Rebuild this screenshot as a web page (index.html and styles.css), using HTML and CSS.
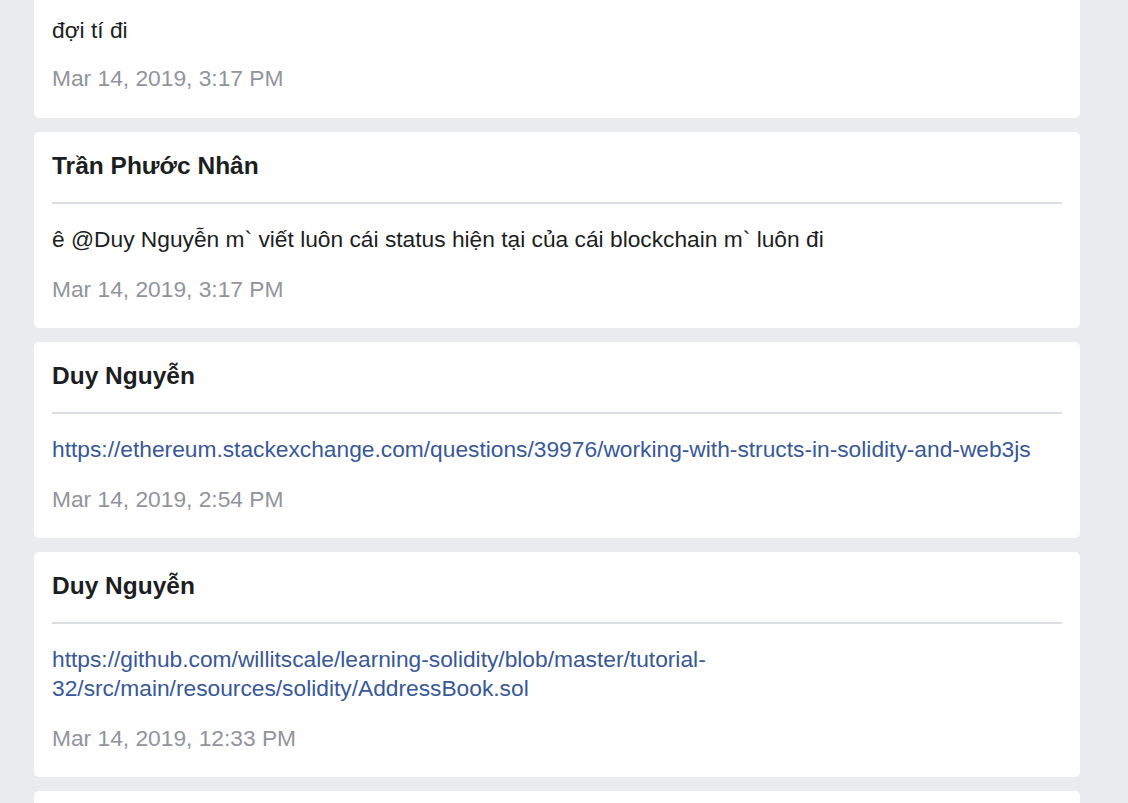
FILE: index.html
```html
<!DOCTYPE html>
<html lang="vi">
<head>
<meta charset="utf-8">
<title>Messages</title>
<link rel="stylesheet" href="styles.css">
</head>
<body>
<main class="feed">
  <article class="card card-cut">
    <p class="msg">đợi tí đi</p>
    <p class="date">Mar 14, 2019, 3:17 PM</p>
  </article>
  <article class="card">
    <h2 class="author">Trần Phước Nhân</h2>
    <hr class="divider">
    <p class="msg">ê @Duy Nguyễn m` viết luôn cái status hiện tại của cái blockchain m` luôn đi</p>
    <p class="date">Mar 14, 2019, 3:17 PM</p>
  </article>
  <article class="card">
    <h2 class="author">Duy Nguyễn</h2>
    <hr class="divider">
    <p class="msg"><a class="link" href="#">https://ethereum.stackexchange.com/questions/39976/working-with-structs-in-solidity-and-web3js</a></p>
    <p class="date">Mar 14, 2019, 2:54 PM</p>
  </article>
  <article class="card">
    <h2 class="author">Duy Nguyễn</h2>
    <hr class="divider">
    <p class="msg"><a class="link" href="#">https://github.com/willitscale/learning-solidity/blob/master/tutorial-32/src/main/resources/solidity/AddressBook.sol</a></p>
    <p class="date">Mar 14, 2019, 12:33 PM</p>
  </article>
  <article class="card card-tail"></article>
</main>
</body>
</html>
```

FILE: styles.css
```css
html, body {
  margin: 0;
  padding: 0;
  background: #e9ebee;
  height: 803px;
  overflow: hidden;
}
body {
  font-family: "Liberation Sans", Arial, sans-serif;
  color: #1c1e21;
}
.feed {
  display: flex;
  flex-direction: column;
  gap: 14px;
  margin: -2px 0 0 34px;
  width: 1046px;
}
.card {
  background: #fff;
  border-radius: 5px;
  padding: 19px 18px 24px;
  box-sizing: border-box;
}
.card-cut {
  padding-top: 18px;
  padding-bottom: 25px;
  border-top-left-radius: 0;
  border-top-right-radius: 0;
}
.card-tail {
  height: 60px;
}
.author {
  margin: 0;
  font-size: 24.5px;
  line-height: 29px;
  font-weight: bold;
}
.divider {
  margin: 22px 0 0;
  border: 0;
  height: 2px;
  background: #dadde1;
}
.msg {
  margin: 21px 0 0;
  font-size: 22.75px;
  line-height: 29px;
}
.card-cut .msg {
  margin-top: 0;
}
.date {
  margin: 21px 0 0;
  font-size: 22.75px;
  line-height: 29px;
  color: #90949c;
}
.card-cut .date {
  margin-top: 19px;
}
.link {
  color: #385898;
  text-decoration: none;
}
```
